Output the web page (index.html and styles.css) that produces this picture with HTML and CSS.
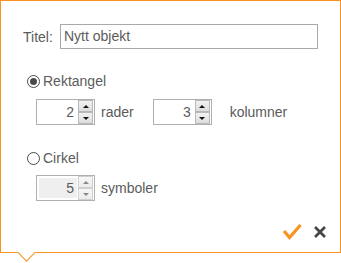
FILE: index.html
```html
<!DOCTYPE html>
<html>
<head>
<meta charset="utf-8">
<link rel="stylesheet" href="styles.css">
</head>
<body>
<div class="popup">
  <div class="title-row">
    <span class="title-label">Titel:</span>
    <div class="title-input">Nytt objekt</div>
  </div>

  <div class="radio-row first">
    <span class="radio checked"></span>
    <span class="radio-text">Rektangel</span>
  </div>
  <div class="spin-row">
    <div class="spinner">
      <div class="spin-value">2</div>
      <div class="spin-buttons">
        <div class="spin-btn"><span class="arrow-up"></span></div>
        <div class="spin-btn"><span class="arrow-down"></span></div>
      </div>
    </div>
    <span class="spin-label rader">rader</span>
    <div class="spinner">
      <div class="spin-value">3</div>
      <div class="spin-buttons">
        <div class="spin-btn"><span class="arrow-up"></span></div>
        <div class="spin-btn"><span class="arrow-down"></span></div>
      </div>
    </div>
    <span class="spin-label kolumner">kolumner</span>
  </div>

  <div class="radio-row second">
    <span class="radio"></span>
    <span class="radio-text">Cirkel</span>
  </div>
  <div class="spin-row last">
    <div class="spinner disabled">
      <div class="spin-value">5</div>
      <div class="spin-buttons">
        <div class="spin-btn"><span class="arrow-up"></span></div>
        <div class="spin-btn"><span class="arrow-down"></span></div>
      </div>
    </div>
    <span class="spin-label">symboler</span>
  </div>

  <div class="actions">
    <svg class="ok" width="20" height="20" viewBox="0 0 20 20">
      <polyline points="2,9 7.5,15.5 18.5,3" fill="none" stroke="#f7931e" stroke-width="3.2" stroke-linejoin="miter"/>
    </svg>
    <svg class="cancel" width="16" height="16" viewBox="0 0 16 16">
      <line x1="3" y1="3" x2="13" y2="13" stroke="#444" stroke-width="2.6"/>
      <line x1="13" y1="3" x2="3" y2="13" stroke="#444" stroke-width="2.6"/>
    </svg>
  </div>

  <div class="pointer"></div>
</div>
</body>
</html>
```

FILE: styles.css
```css
html, body {
  margin: 0;
  padding: 0;
  background: #fff;
}

body {
  font-family: "Liberation Sans", Arial, sans-serif;
  font-size: 14px;
  color: #5b5b5b;
  height: 263px;
}

.popup {
  position: relative;
  width: 341px;
  height: 253px;
  box-sizing: border-box;
  border: 1px solid #f7931e;
  background: #fff;
  padding: 23px 0 0 22px;
}

.title-row {
  display: flex;
  align-items: center;
  height: 25px;
}

.title-label {
  width: 37px;
}

.title-input {
  width: 258px;
  height: 25px;
  box-sizing: border-box;
  border: 1px solid #a9a9a9;
  padding: 0 3px;
  line-height: 23px;
}

.radio-row {
  display: flex;
  align-items: center;
  height: 20px;
  line-height: 20px;
  padding-left: 4px;
}

.radio-row.first {
  margin-top: 22px;
}

.radio-row.second {
  margin-top: 23px;
}

.radio {
  width: 13px;
  height: 13px;
  box-sizing: border-box;
  border: 1px solid #4a4a4a;
  border-radius: 50%;
  margin-right: 3px;
  position: relative;
}

.radio.checked::after {
  content: "";
  position: absolute;
  left: 2px;
  top: 2px;
  width: 7px;
  height: 7px;
  border-radius: 50%;
  background: #4a4a4a;
}

.spin-row {
  display: flex;
  align-items: center;
  height: 26px;
  margin-top: 8px;
  padding-left: 13px;
}

.spin-row.last {
  margin-top: 7px;
}

.spinner {
  display: flex;
  width: 59px;
  height: 26px;
  box-sizing: border-box;
  border: 1px solid #b0b0b0;
  background: #fff;
}

.spin-value {
  width: 38px;
  height: 20px;
  margin: 2px 1px 2px 2px;
  box-sizing: border-box;
  padding-right: 3px;
  text-align: right;
  line-height: 20px;
}

.spinner.disabled .spin-value {
  background: #efefef;
}

.spin-buttons {
  width: 15px;
  margin-right: 1px;
  display: flex;
  flex-direction: column;
}

.spin-btn {
  height: 12px;
  box-sizing: border-box;
  border: 1px solid #b8b8b8;
  background: linear-gradient(#f2f2f2, #dcdcdc);
  display: flex;
  align-items: center;
  justify-content: center;
}

.spinner.disabled .spin-btn {
  border-color: #d0d0d0;
  background: linear-gradient(#f7f7f7, #ececec);
}

.arrow-up {
  width: 0;
  height: 0;
  border-left: 3px solid transparent;
  border-right: 3px solid transparent;
  border-bottom: 3px solid #111;
}

.arrow-down {
  width: 0;
  height: 0;
  border-left: 3px solid transparent;
  border-right: 3px solid transparent;
  border-top: 3px solid #111;
}

.spinner.disabled .arrow-up {
  border-bottom-color: #888;
}

.spinner.disabled .arrow-down {
  border-top-color: #888;
}

.spin-label {
  margin-left: 6px;
}

.spin-label.rader {
  margin-right: 19px;
}

.spin-label.kolumner {
  margin-left: 18px;
}

.actions {
  display: flex;
  justify-content: flex-end;
  align-items: center;
  gap: 10px;
  height: 20px;
  margin-top: 21px;
  padding-right: 12px;
}

.actions svg {
  display: block;
}

.pointer {
  position: absolute;
  left: 19px;
  top: 244.5px;
  width: 13px;
  height: 13px;
  box-sizing: border-box;
  background: #fff;
  border-right: 1px solid #f7931e;
  border-bottom: 1px solid #f7931e;
  transform: rotate(45deg);
}
```
